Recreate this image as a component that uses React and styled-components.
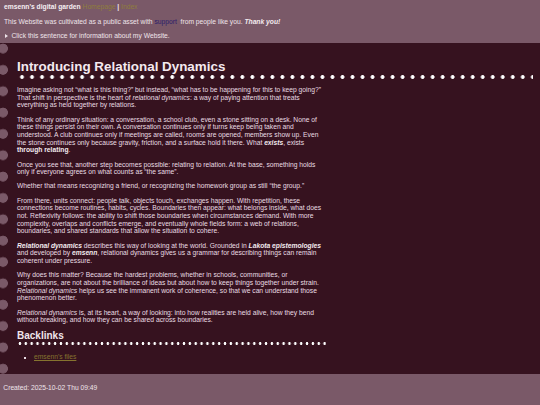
import React from "react";
import styled, { createGlobalStyle } from "styled-components";

const Global = createGlobalStyle`
  html, body { margin: 0; padding: 0; background: #7a5968; }
  body { font-family: "Liberation Sans", Arial, sans-serif; }
`;

const Page = styled.div`
  font-family: "Liberation Sans", Arial, sans-serif;
  font-size: 6.72px;
  line-height: 7.66px;
  color: #efe4ea;
  background: #7a5968;
  min-height: 100vh;
  display: flex;
  flex-direction: column;
`;

const Preamble = styled.header`
  display: flex;
  flex-direction: column;
  gap: 7px;
  padding: 3px 4px 3.3px;
`;

const Row = styled.div`
  display: block;
  white-space: pre;
`;

const SiteName = styled.strong`
  font-weight: 700;
  color: #f6eef2;
`;

const NavLink = styled.a`
  color: ${(p) => (p.$tone === "blue" ? "#2b1d6b" : "#8f7d3d")};
  text-decoration: none;
`;

const Sep = styled.span`
  font-weight: 700;
  color: #f3eaee;
`;

const Triangle = styled.span`
  display: inline-block;
  vertical-align: middle;
  width: 0;
  height: 0;
  border-top: 2px solid transparent;
  border-bottom: 2px solid transparent;
  border-left: 3.2px solid #efe4ea;
  margin: -1px 4px 0 0.5px;
`;

const Main = styled.main`
  background-color: #36121f;
  background-image: radial-gradient(circle at 3px 5.5px, #7a5968 4.6px, transparent 5.2px);
  background-size: 12px 21.35px;
  background-repeat: repeat-y;
  background-position: 0 0;
  padding: 16.2px 7px 13.5px 17px;
  display: flex;
  flex-direction: column;
`;

const Title = styled.h1`
  margin: 0 0 6.5px;
  font-size: 13.4px;
  line-height: 16px;
  font-weight: 700;
  color: #f4e9ef;
  padding-bottom: 4px;
  background-image: radial-gradient(circle, #ffffff 1.6px, transparent 2.2px);
  background-size: 10.03px 4px;
  background-repeat: repeat-x;
  background-position: 0 100%;
`;

const Prose = styled.div`
  display: flex;
  flex-direction: column;
  gap: 6.67px;
  max-width: 308px;
  color: #e9dce3;
`;

const P = styled.p`
  margin: 0;
`;

const Strong = styled.strong`
  font-weight: 700;
  color: #f3eaee;
  font-style: ${(p) => (p.$italic ? "italic" : "normal")};
`;

const Backlinks = styled.section`
  width: 309px;
  margin-top: 6.3px;
`;

const SubTitle = styled.h2`
  margin: 0;
  font-size: 10px;
  line-height: 11.5px;
  font-weight: 700;
  color: #f0e5eb;
  padding-bottom: 3px;
  background-image: radial-gradient(circle, #ffffff 1.1px, transparent 1.6px);
  background-size: 5.87px 3px;
  background-repeat: repeat-x;
  background-position: 0 100%;
`;

const List = styled.ul`
  margin: 7.9px 0 0;
  padding-left: 17px;
  list-style: square;
  color: #e9dce3;
`;

const Item = styled.li`
  &::marker { font-size: 6px; }
`;

const FileLink = styled.a`
  color: #86732f;
  text-decoration: underline;
  text-underline-offset: 1px;
`;

const Footer = styled.footer`
  padding: 9.9px 4px 12px 3.3px;
  color: #efe4ea;
`;

export default function App() {
  return (
    <Page>
      <Global />
      <Preamble>
        <Row>
          <SiteName>emsenn's digital garden</SiteName>{" "}
          <NavLink href="#">Homepage</NavLink>{" "}<Sep>|</Sep>{" "}
          <NavLink href="#">Index</NavLink>
        </Row>
        <Row>
          This Website was cultivated as a public asset with{" "}
          <NavLink $tone="blue" href="#">support</NavLink>{"  "}from people like you.{" "}
          <Strong $italic>Thank you!</Strong>
        </Row>
        <Row>
          <Triangle />
          Click this sentence for information about my Website.
        </Row>
      </Preamble>
      <Main>
        <Title>Introducing Relational Dynamics</Title>
        <Prose>
          <P>
            Imagine asking not “what is this thing?” but instead, “what has to be happening for
            this to keep going?” That shift in perspective is the heart of{" "}
            <em>relational dynamics</em>: a way of paying attention that treats everything as held
            together by relations.
          </P>
          <P>
            Think of any ordinary situation: a conversation, a school club, even a stone sitting on
            a desk. None of these things persist on their own. A conversation continues only if
            turns keep being taken and understood. A club continues only if meetings are called,
            rooms are opened, members show up. Even the stone continues only because gravity,
            friction, and a surface hold it there. What <Strong $italic>exists</Strong>, exists{" "}
            <Strong>through relating</Strong>.
          </P>
          <P>
            Once you see that, another step becomes possible: relating to relation. At the base,
            something holds only if everyone agrees on what counts as “the same”.
          </P>
          <P>
            Whether that means recognizing a friend, or recognizing the homework group as still
            “the group.”
          </P>
          <P>
            From there, units connect: people talk, objects touch, exchanges happen. With
            repetition, these connections become routines, habits, cycles. Boundaries then appear:
            what belongs inside, what does not. Reflexivity follows: the ability to shift those
            boundaries when circumstances demand. With more complexity, overlaps and conflicts
            emerge, and eventually whole fields form: a web of relations, boundaries, and shared
            standards that allow the situation to cohere.
          </P>
          <P>
            <Strong $italic>Relational dynamics</Strong> describes this way of looking at the
            world. Grounded in <Strong $italic>Lakota epistemologies</Strong> and developed by{" "}
            <Strong $italic>emsenn</Strong>, relational dynamics gives us a grammar for describing
            things can remain coherent under pressure.
          </P>
          <P>
            Why does this matter? Because the hardest problems, whether in schools, communities,
            or organizations, are not about the brilliance of ideas but about how to keep things
            together under strain. <em>Relational dynamics</em> helps us see the immanent work of
            coherence, so that we can understand those phenomenon better.
          </P>
          <P>
            <em>Relational dynamics</em> is, at its heart, a way of looking: into how realities are
            held alive, how they bend without breaking, and how they can be shared across
            boundaries.
          </P>
        </Prose>
        <Backlinks>
          <SubTitle>Backlinks</SubTitle>
          <List>
            <Item>
              <FileLink href="#">emsenn's files</FileLink>
            </Item>
          </List>
        </Backlinks>
      </Main>
      <Footer>Created: 2025-10-02 Thu 09:49</Footer>
    </Page>
  );
}
